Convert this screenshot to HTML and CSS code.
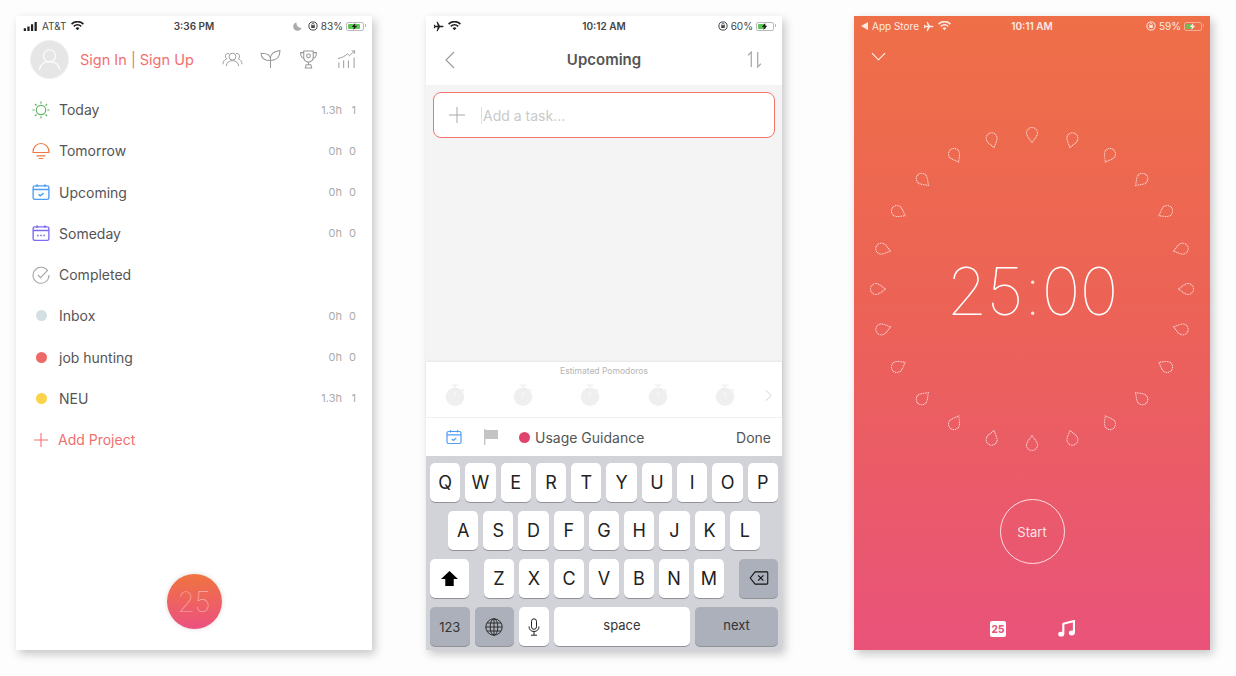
FILE: index.html
```html
<!DOCTYPE html>
<html lang="en">
<head>
    <meta charset="UTF-8">
    <meta name="viewport" content="width=device-width, initial-scale=1.0">
    <title>Focus To-Do</title>
    <link rel="stylesheet" href="styles.css">
</head>
<body>
    <!-- shared icons -->
    <svg class="defs">
        <symbol id="wifi" viewBox="0 0 14 10"><path d="M7 9.6 4.9 7.3a3 3 0 0 1 4.2 0zM3.6 6 2.4 4.7a6.6 6.6 0 0 1 9.2 0L10.4 6a5 5 0 0 0-6.8 0zM1.2 3.6 0 2.3a10 10 0 0 1 14 0l-1.2 1.3a8.3 8.3 0 0 0-11.6 0z" fill="currentColor"/></symbol>
        <symbol id="plane" viewBox="0 0 12 12"><path d="M11.5 6c0-.5-.5-.9-1.2-.9H7.6L5 .8H3.9l1.3 4.3H2.7L1.8 4H.8l.5 2-.5 2h1l.9-1.1h2.5L3.9 11.2H5l2.6-4.3h2.700c.7 0 1.200-.4 1.200-.9z" fill="currentColor"/></symbol>
        <symbol id="lock" viewBox="0 0 10 10"><circle cx="5" cy="5" r="4.1" fill="none" stroke="currentColor"/><rect x="3.2" y="4.2" width="3.6" height="2.8" fill="currentColor"/><path d="M3.8 4.3V3.500a1.200 1.200 0 0 1 2.400 0v.8" fill="none" stroke="currentColor" stroke-width=".7"/></symbol>
        <symbol id="bolt" viewBox="0 0 8 10"><path d="M5 0 0 5.800h3L2.500 10 8 3.800H4.600z" fill="currentColor"/></symbol>
        <symbol id="petal" viewBox="-9 -12 18 24"><path d="M0 7.5C-2 4.500-5.500 1-5.500-2A5.500 5.500 0 0 1 5.500-2C5.500 1 2 4.500 0 7.500z" fill="none" stroke="#fff" stroke-opacity=".8" stroke-width="1.100" stroke-linecap="round" stroke-dasharray="0.1 1.600"/></symbol>
        <symbol id="tomato" viewBox="0 0 24 28"><path d="M8 1.500h8M12 1.500v4M20 6l2.500 2.500" stroke="#efefef" stroke-width="1.500" fill="none"/><circle cx="12" cy="15.500" r="11.300" fill="#efefef"/><path d="M12 10.500v4.500" stroke="#fff"/></symbol>
        <symbol id="upcoming" viewBox="0 0 16 16"><rect x="1" y="2.500" width="14" height="12" rx="1.500" fill="none" stroke="currentColor" stroke-width="1.200"/><path d="M1 5.800h14M4.500 1v2.500M11.500 1v2.500" fill="none" stroke="currentColor" stroke-width="1.200"/><path d="M5.800 10l1.500 1.400 3-2.400" fill="none" stroke="currentColor" stroke-width="1.200"/></symbol>
    </svg>

    <main class="stage">

        <!-- 메뉴 화면 -->
        <section class="phone phone_menu">
            <div class="status">
                <div class="status_side">
                    <svg class="signal" viewBox="0 0 15 10"><path d="M0 7h2.500v3H0zM4 5h2.500v5H4zM8 2.500h2.500V10H8zM12 0h2.500v10H12z" fill="currentColor"/></svg>
                    <span>AT&amp;T</span>
                    <svg class="st_wifi"><use href="#wifi"/></svg>
                </div>
                <b class="status_time">3:36 PM</b>
                <div class="status_side status_right">
                    <svg class="st_moon" viewBox="0 0 10 10"><path d="M4 .5a4.700 4.700 0 1 0 5.500 6A5 5 0 0 1 4 .5z" fill="#aaa"/></svg>
                    <svg class="st_lock"><use href="#lock"/></svg>
                    <span>83%</span>
                    <span class="batt"><i class="batt_fill" style="width:83%"></i><svg class="batt_bolt"><use href="#bolt"/></svg></span>
                </div>
            </div>

            <header class="user_bar">
                <div class="avatar">
                    <svg viewBox="0 0 40 40"><circle cx="20" cy="16" r="6.500" fill="none" stroke="#fff" stroke-width="1.200"/><path d="M9 31c1-6 5-8.500 11-8.500S30 25 31 31" fill="none" stroke="#fff" stroke-width="1.200"/></svg>
                </div>
                <a class="sign_link" href="#">Sign In | Sign Up</a>
                <div class="user_icons">
                    <svg viewBox="0 0 22 18"><g fill="none" stroke="#999" stroke-width="1"><circle cx="11" cy="6" r="3.600"/><path d="M4.500 16c.5-4 3-5.800 6.500-5.800s6 1.800 6.500 5.800"/><path d="M7.200 2.700a3 3 0 0 0-2.200 5.500C2.500 9 1.200 11 1 14M14.800 2.700A3 3 0 0 1 17 8.200c2.500.8 3.800 2.800 4 5.800"/></g></svg>
                    <svg viewBox="0 0 20 18"><g fill="none" stroke="#999" stroke-width="1"><path d="M10 17V8.500C10 4 6 3 1 3c0 5 3.500 7 9 7M10 8c0-4 3.500-6.800 9-7.500 0 6-3 9.500-9 9.500"/></g></svg>
                    <svg viewBox="0 0 18 18"><g fill="none" stroke="#999" stroke-width="1"><path d="M4.500 1h9v6a4.500 4.500 0 0 1-9 0zM4.500 2.500H1.500c0 3 1 5 3.500 5.500M13.500 2.500h3c0 3-1 5-3.500 5.500M9 11.500V14M6 17l.8-3h4.400l.8 3z"/><circle cx="9" cy="5.500" r="1.800"/></g></svg>
                    <svg viewBox="0 0 20 20"><g fill="none" stroke="#999" stroke-width="1"><path d="M1 9c5-1 8-3 10-5l2 2 5.500-5M15.500 1h3v3M2 19v-6M7 19v-8M12 19v-8M18 19V8"/></g></svg>
                </div>
            </header>

            <ul class="menu_lst">
                <li class="menu_item">
                    <span class="menu_ico"><svg viewBox="0 0 20 20"><g fill="none" stroke="#5cb860" stroke-width="1.300"><circle cx="10" cy="10" r="5.200"/><path d="M10 .5v2.500M10 17v2.500M.5 10H3M17 10h2.500M3.300 3.300l1.700 1.700M15 15l1.700 1.700M3.300 16.700 5 15M15 5l1.700-1.700"/></g></svg></span>
                    <span class="menu_txt">Today</span><span class="menu_hour">1.3h</span><span class="menu_cnt">1</span>
                </li>
                <li class="menu_item">
                    <span class="menu_ico"><svg viewBox="0 0 18 18"><g fill="none" stroke="#f0793e" stroke-width="1.200"><path d="M1 10.500C1 5 4.500 1.500 9 1.500s8 3.500 8 9zM.5 10.500h17M4.500 13.800h9M6.800 16.500h4.400"/></g></svg></span>
                    <span class="menu_txt">Tomorrow</span><span class="menu_hour">0h</span><span class="menu_cnt">0</span>
                </li>
                <li class="menu_item">
                    <span class="menu_ico ico_blue"><svg><use href="#upcoming"/></svg></span>
                    <span class="menu_txt">Upcoming</span><span class="menu_hour">0h</span><span class="menu_cnt">0</span>
                </li>
                <li class="menu_item">
                    <span class="menu_ico"><svg viewBox="0 0 16 16"><g fill="none" stroke="#7a6bf0" stroke-width="1.200"><rect x="1" y="2.500" width="14" height="12" rx="1.500"/><path d="M1 5.800h14M4.500 1v2.500M11.500 1v2.500"/></g><path d="M4.500 9.500h1.400v1.400H4.500zM7.300 9.500h1.400v1.400H7.300zM10.100 9.500h1.400v1.400h-1.400z" fill="#7a6bf0"/></svg></span>
                    <span class="menu_txt">Someday</span>
                    <span class="menu_hour">0h</span><span class="menu_cnt">0</span>
                </li>
                <li class="menu_item">
                    <span class="menu_ico"><svg viewBox="0 0 20 20"><g fill="none" stroke="#a5a5a5" stroke-width="1.200"><path d="M17.500 5.500A8.900 8.900 0 1 0 18.900 10"/><path d="M6.500 10l3 3 8-8.500"/></g></svg></span>
                    <span class="menu_txt">Completed</span>
                </li>
                <li class="menu_item">
                    <span class="menu_ico"><i class="dot dot_inbox"></i></span>
                    <span class="menu_txt">Inbox</span><span class="menu_hour">0h</span><span class="menu_cnt">0</span>
                </li>
                <li class="menu_item">
                    <span class="menu_ico"><i class="dot dot_job"></i></span>
                    <span class="menu_txt">job hunting</span><span class="menu_hour">0h</span><span class="menu_cnt">0</span>
                </li>
                <li class="menu_item">
                    <span class="menu_ico"><i class="dot dot_neu"></i></span>
                    <span class="menu_txt">NEU</span><span class="menu_hour">1.3h</span><span class="menu_cnt">1</span>
                </li>
                <li class="menu_item menu_add">
                    <span class="menu_ico"><svg viewBox="0 0 14 14"><path d="M7 0v14M0 7h14" stroke="#f0706e" stroke-width="1.100"/></svg></span>
                    <span class="menu_txt">Add Project</span>
                </li>
            </ul>

            <button class="fab">25</button>
        </section>

        <!-- 할일 입력 화면 -->
        <section class="phone phone_task">
            <div class="status">
                <div class="status_side">
                    <svg class="st_plane"><use href="#plane"/></svg>
                    <svg class="st_wifi"><use href="#wifi"/></svg>
                </div>
                <b class="status_time">10:12 AM</b>
                <div class="status_side status_right">
                    <svg class="st_lock"><use href="#lock"/></svg>
                    <span>60%</span>
                    <span class="batt"><i class="batt_fill" style="width:60%"></i><svg class="batt_bolt"><use href="#bolt"/></svg></span>
                </div>
            </div>
            <header class="task_head">
                <svg class="task_back" viewBox="0 0 10 18"><path d="M9 1 1 9l8 8" fill="none" stroke="#999" stroke-width="1.100"/></svg>
                <h1 class="task_title">Upcoming</h1>
                <svg class="task_sort" viewBox="0 0 16 16"><path d="M5 15V1L2 4M11 1v14l3-3" fill="none" stroke="#aaa" stroke-width="1.200"/></svg>
            </header>
            <div class="task_body">
                <div class="task_input">
                    <svg class="task_plus" viewBox="0 0 16 16"><path d="M8 0v16M0 8h16" stroke="#aaa" stroke-width="1"/></svg>
                    <span class="task_holder">Add a task...</span>
                </div>
            </div>
            <div class="pomo_panel">
                <div class="pomo_label">Estimated Pomodoros</div>
                <div class="pomo_row">
                    <svg class="pomo_ico"><use href="#tomato"/></svg>
                    <svg class="pomo_ico"><use href="#tomato"/></svg>
                    <svg class="pomo_ico"><use href="#tomato"/></svg>
                    <svg class="pomo_ico"><use href="#tomato"/></svg>
                    <svg class="pomo_ico"><use href="#tomato"/></svg>
                    <svg class="pomo_next" viewBox="0 0 8 14"><path d="M1 1l6 6-6 6" fill="none" stroke="#ccc"/></svg>
                </div>
            </div>
            <div class="task_tools">
                <svg class="tool_cal"><use href="#upcoming"/></svg>
                <svg class="tool_flag" viewBox="0 0 16 16"><path d="M1 0h1.400v16H1zM2.400 1H15v9H2.400z" fill="#c4c4c4"/></svg>
                <i class="dot dot_usage"></i>
                <span class="tool_name">Usage Guidance</span>
                <span class="tool_done">Done</span>
            </div>
            <div class="keyboard">
                <div class="kb_row">
                    <span class="key">Q</span><span class="key">W</span><span class="key">E</span><span class="key">R</span><span class="key">T</span><span class="key">Y</span><span class="key">U</span><span class="key">I</span><span class="key">O</span><span class="key">P</span>
                </div>
                <div class="kb_row kb_row2">
                    <span class="key">A</span><span class="key">S</span><span class="key">D</span><span class="key">F</span><span class="key">G</span><span class="key">H</span><span class="key">J</span><span class="key">K</span><span class="key">L</span>
                </div>
                <div class="kb_row kb_row3">
                    <span class="key key_shift"><svg viewBox="0 0 18 16"><path d="M9 0 18 8.500h-4.500V16h-9V8.500H0z" fill="#000"/></svg></span>
                    <div class="kb_letters">
                        <span class="key">Z</span><span class="key">X</span><span class="key">C</span><span class="key">V</span><span class="key">B</span><span class="key">N</span><span class="key">M</span>
                    </div>
                    <span class="key key_gray key_del"><svg viewBox="0 0 22 16"><path d="M6.500 1H20a1 1 0 0 1 1 1v12a1 1 0 0 1-1 1H6.500L1 8z" fill="none" stroke="#111" stroke-width="1.200"/><path d="M10 5l6 6M16 5l-6 6" stroke="#111" stroke-width="1.300"/></svg></span>
                </div>
                <div class="kb_row kb_row4">
                    <span class="key key_gray key_fn">123</span>
                    <span class="key key_gray key_fn"><svg class="key_globe" viewBox="0 0 18 18"><g fill="none" stroke="#222" stroke-width=".9"><circle cx="9" cy="9" r="8.200"/><ellipse cx="9" cy="9" rx="3.800" ry="8.200"/><path d="M9 .8v16.400M.8 9h16.400M2 5h14M2 13h14"/></g></svg></span>
                    <span class="key key_mic"><svg viewBox="0 0 12 18"><g fill="none" stroke="#222" stroke-width="1"><rect x="3.500" y=".8" width="5" height="10.500" rx="2.500"/><path d="M1 8.500c0 3 2 5 5 5s5-2 5-5M6 13.500v3.500M3 17.200h6"/></g></svg></span>
                    <span class="key key_space">space</span>
                    <span class="key key_gray key_next">next</span>
                </div>
            </div>
        </section>

        <!-- 타이머 화면 -->
        <section class="phone phone_timer">
            <div class="status">
                <div class="status_side">
                    <svg class="st_back" viewBox="0 0 7 8"><path d="M7 0v8L0 4z" fill="currentColor"/></svg>
                    <span>App Store</span>
                    <svg class="st_plane"><use href="#plane"/></svg>
                    <svg class="st_wifi"><use href="#wifi"/></svg>
                </div>
                <b class="status_time">10:11 AM</b>
                <div class="status_side status_right">
                    <svg class="st_lock"><use href="#lock"/></svg>
                    <span>59%</span>
                    <span class="batt"><i class="batt_fill" style="width:59%"></i><svg class="batt_bolt"><use href="#bolt"/></svg></span>
                </div>
            </div>
            <div class="timer_top">
                <svg viewBox="0 0 16 9"><path d="M1 1l7 7 7-7" fill="none" stroke="#fff" stroke-width="1.100"/></svg>
            </div>
            <div class="dial">
                <svg class="dial_petals" viewBox="-165 -165 330 330">
                    <use href="#petal" x="-9" y="-166" width="18" height="24"/>
                    <use href="#petal" x="-9" y="-166" width="18" height="24" transform="rotate(15)"/>
                    <use href="#petal" x="-9" y="-166" width="18" height="24" transform="rotate(30)"/>
                    <use href="#petal" x="-9" y="-166" width="18" height="24" transform="rotate(45)"/>
                    <use href="#petal" x="-9" y="-166" width="18" height="24" transform="rotate(60)"/>
                    <use href="#petal" x="-9" y="-166" width="18" height="24" transform="rotate(75)"/>
                    <use href="#petal" x="-9" y="-166" width="18" height="24" transform="rotate(90)"/>
                    <use href="#petal" x="-9" y="-166" width="18" height="24" transform="rotate(105)"/>
                    <use href="#petal" x="-9" y="-166" width="18" height="24" transform="rotate(120)"/>
                    <use href="#petal" x="-9" y="-166" width="18" height="24" transform="rotate(135)"/>
                    <use href="#petal" x="-9" y="-166" width="18" height="24" transform="rotate(150)"/>
                    <use href="#petal" x="-9" y="-166" width="18" height="24" transform="rotate(165)"/>
                    <use href="#petal" x="-9" y="-166" width="18" height="24" transform="rotate(180)"/>
                    <use href="#petal" x="-9" y="-166" width="18" height="24" transform="rotate(195)"/>
                    <use href="#petal" x="-9" y="-166" width="18" height="24" transform="rotate(210)"/>
                    <use href="#petal" x="-9" y="-166" width="18" height="24" transform="rotate(225)"/>
                    <use href="#petal" x="-9" y="-166" width="18" height="24" transform="rotate(240)"/>
                    <use href="#petal" x="-9" y="-166" width="18" height="24" transform="rotate(255)"/>
                    <use href="#petal" x="-9" y="-166" width="18" height="24" transform="rotate(270)"/>
                    <use href="#petal" x="-9" y="-166" width="18" height="24" transform="rotate(285)"/>
                    <use href="#petal" x="-9" y="-166" width="18" height="24" transform="rotate(300)"/>
                    <use href="#petal" x="-9" y="-166" width="18" height="24" transform="rotate(315)"/>
                    <use href="#petal" x="-9" y="-166" width="18" height="24" transform="rotate(330)"/>
                    <use href="#petal" x="-9" y="-166" width="18" height="24" transform="rotate(345)"/>
                </svg>
                <div class="dial_time">25<span class="dial_colon">:</span>00</div>
            </div>
            <button class="start_btn">Start</button>
            <div class="timer_bottom">
                <span class="cal_tile">25</span>
                <svg class="music_ico" viewBox="0 0 16 16"><path d="M5 3.500 15 1v11M5 3v10" fill="none" stroke="#fff" stroke-width="2"/><ellipse cx="3" cy="13.300" rx="2.800" ry="2.300" fill="#fff"/><ellipse cx="13" cy="12.200" rx="2.800" ry="2.300" fill="#fff"/></svg>
            </div>
        </section>

    </main>
</body>
</html>
```

FILE: styles.css
```css
/* 초기화 */
body,ul,h1{margin: 0; padding: 0;}
ul{list-style: none;}
a{text-decoration: none;}
button{border: 0; padding: 0; font-family: inherit; background: none;}
i{display: block;}

body{
    width: 1236px; height: 676px; overflow: hidden;
    background-color: #fdfdfd; color: #555;
    font-family: Inter, "Noto Sans", sans-serif;
}
.defs{display: none;}

/* 레이아웃 */
.stage{display: flex; padding: 16px 0 0 16px;}
.phone{
    width: 356px; height: 634px; flex: none;
    display: flex; flex-direction: column;
    position: relative;
    background-color: #fff;
    box-shadow: 3px 4px 9px rgba(0,0,0,.22);
}
.phone_task{margin-left: 54px;}
.phone_timer{margin-left: 72px;}

/* 상태바 */
.status{
    height: 20px; padding: 0 8px 0 7px; flex: none;
    display: flex; align-items: center; justify-content: space-between;
    position: relative;
    font-size: 10px; color: #444;
}
.status_side{display: flex; align-items: center; gap: 4px;}
.status_right{gap: 3px;}
.status_time{
    position: absolute; left: 0; right: 0; text-align: center;
    font-weight: 600; font-size: 10px; color: #444;
}
.signal{width: 15px; height: 9px; color: #222;}
.st_wifi{width: 13px; height: 10px; color: #222;}
.st_plane{width: 11px; height: 11px; color: #222;}
.st_lock{width: 10px; height: 10px; color: #444;}
.st_moon{width: 9px; height: 9px; margin-right: 3px;}
.st_back{width: 7px; height: 8px;}
.batt{
    width: 18px; height: 9px; padding: 1px; box-sizing: border-box;
    border: 1px solid #bbb; border-radius: 2px; position: relative;
}
.batt::after{
    content: ""; position: absolute; right: -3px; top: 1.5px;
    width: 1px; height: 3px; background-color: #bbb;
}
.batt_fill{height: 100%; background-color: #5fc855; border-radius: 1px;}
.batt_bolt{
    position: absolute; left: 4px; top: 0;
    width: 7px; height: 7px; color: #222;
}

/* 메뉴 화면 */
.user_bar{
    height: 46px; padding: 0 15px 0 14px;
    display: flex; align-items: center;
}
.avatar{
    width: 39px; height: 39px; flex: none; border-radius: 50%; box-sizing: border-box;
    background-color: #e6e6e6; border: 1px solid #f0f0f0;
}
.avatar svg{width: 37px; height: 37px; display: block;}
.sign_link{margin-left: 11px; font-size: 14.5px; color: #f26f6f;}
.user_icons{margin-left: auto; display: flex; align-items: center; gap: 17px;}
.user_icons svg{width: 21px; height: 19px; display: block;}

.menu_lst{margin-top: 7px;}
.menu_item{
    height: 41.25px; padding: 0 16px;
    display: flex; align-items: center;
}
.menu_ico{
    width: 18px; height: 18px; flex: none; margin-right: 9px;
    display: flex; align-items: center; justify-content: center;
    color: #4d9df5;
}
.menu_ico svg{width: 18px; height: 18px; display: block;}
.menu_txt{font-size: 14px; color: #555; flex: 1;}
.menu_hour{font-size: 11px; color: #aaa;}
.menu_cnt{font-size: 11px; color: #aaa; width: 14px; text-align: right;}
.menu_add .menu_ico{margin-right: 8px;}
.menu_add .menu_ico svg{width: 14px; height: 14px;}
.menu_add .menu_txt{color: #f0706e;}

.dot{width: 11px; height: 11px; border-radius: 50%;}
.dot_inbox{background-color: #d3dfe0;}
.dot_job{background-color: #ee6a68;}
.dot_neu{background-color: #fbd44a;}
.dot_usage{background-color: #e0446d; flex: none;}

.fab{
    position: absolute; left: 150.5px; top: 558px;
    width: 55px; height: 55px; border-radius: 50%;
    background: linear-gradient(#f0743f, #ec5080);
    box-shadow: 0 0 5px rgba(0,0,0,.15);
    color: rgba(255,255,255,.5); font-size: 28px; font-weight: 100;
}

/* 할일 입력 화면 */
.task_head{
    height: 49px; padding: 0 19px 2px;
    box-sizing: border-box;
    display: flex; align-items: center; justify-content: space-between;
    position: relative;
}
.task_back{width: 10px; height: 18px;}
.task_title{
    position: absolute; left: 0; right: 0; text-align: center;
    font-size: 15px; font-weight: 600; color: #555;
}
.task_sort{width: 17px; height: 17px;}
.task_body{flex: 1; padding: 7px; background-color: #f4f4f4;}
.task_input{
    height: 46px; box-sizing: border-box;
    padding-left: 15px; border: 1px solid #f0736c; border-radius: 8px;
    background-color: #fff;
    display: flex; align-items: center;
}
.task_plus{width: 16px; height: 16px; flex: none;}
.task_holder{
    margin-left: 16px; padding-left: 1px;
    border-left: 1px solid #f9d5d3;
    font-size: 14px; color: #c9c9c9;
}
.pomo_panel{
    height: 55px; flex: none;
    box-shadow: 0 -1px 2px rgba(0,0,0,.06);
    position: relative;
}
.pomo_label{padding-top: 4px; text-align: center; font-size: 8.5px; color: #b5b5b5;}
.pomo_row{
    margin-top: 3px; padding: 5px 0 0 19px;
    display: flex; align-items: center; gap: 47.5px;
}
.pomo_ico{width: 20px; height: 23px; flex: none;}
.pomo_next{width: 7px; height: 13px; flex: none; margin-left: -18px;}
.task_tools{
    height: 39px; flex: none; box-sizing: border-box;
    padding: 0 11px 0 20px; border-top: 1px solid #f0f0f0;
    display: flex; align-items: center;
}
.tool_cal{width: 16px; height: 16px; color: #4d9df5;}
.tool_flag{width: 16px; height: 16px; margin: 0 20px 0 21px;}
.tool_name{margin-left: 5px; font-size: 14px; color: #555;}
.tool_done{margin-left: auto; font-size: 14px; color: #555;}

.keyboard{
    height: 194px; flex: none; box-sizing: border-box;
    padding: 7px 4px 0;
    background-color: #d1d3d9;
    display: flex; flex-direction: column; gap: 9.6px;
}
.kb_row{display: flex; gap: 5px;}
.kb_row2{padding: 0 18px;}
.kb_row3{justify-content: space-between;}
.kb_letters{display: flex; gap: 5px; width: 240px;}
.key{
    flex: 1 1 0; height: 38.5px; box-sizing: border-box;
    display: flex; align-items: center; justify-content: center;
    background-color: #fff; border-radius: 5px;
    box-shadow: 0 1px 0 rgba(0,0,0,.3);
    font-size: 18px; color: #222;
}
.key_gray{background-color: #abb0ba;}
.key_shift,.key_del{flex: none; width: 39px;}
.key_shift svg{width: 17px; height: 15px;}
.key_del svg{width: 20px; height: 14px;}
.kb_row4 .key{flex: none; font-size: 13px; color: #333; padding-bottom: 3px;}
.kb_row4 .key_fn{width: 39.5px; padding-bottom: 0;}
.key_globe{width: 18px; height: 18px;}
.kb_row4 .key_mic{width: 30px; padding-bottom: 0;}
.key_mic svg{width: 12px; height: 18px;}
.kb_row4 .key_space{width: 136px;}
.kb_row4 .key_next{width: 83px;}

/* 타이머 화면 */
.phone_timer{
    background: linear-gradient(#ef6f48, #ec6356 45%, #e9537a);
}
.phone_timer .status,
.phone_timer .status_time,
.phone_timer .st_wifi,
.phone_timer .st_plane,
.phone_timer .st_lock{color: #fff;}
.phone_timer .status{opacity: .85;}
.phone_timer .batt{border-color: #f3b9a5;}
.phone_timer .batt_bolt{color: #fff;}
.timer_top{height: 30px; margin-top: 5px; padding-left: 17px; display: flex; align-items: center;}
.timer_top svg{width: 15px; height: 9px;}
.dial{
    width: 330px; height: 330px; margin: 53px auto 0; padding-top: 4px; box-sizing: border-box;
    display: flex; align-items: center; justify-content: center;
    position: relative;
}
.dial_petals{position: absolute; left: 0; top: 0; width: 330px; height: 330px;}
.dial_time{
    font-size: 66px; font-weight: 100; color: #fff; line-height: 1;
    letter-spacing: -1px;
}
.dial_colon{opacity: .8; margin: 0 1px;}
.start_btn{
    width: 65px; height: 65px; margin: 45px auto 0; box-sizing: border-box;
    border: 1px solid rgba(255,255,255,.8); border-radius: 50%;
    color: rgba(255,255,255,.85); font-size: 13px;
}
.timer_bottom{
    margin-top: 56px; padding-left: 136px;
    display: flex; align-items: center; gap: 52px;
}
.cal_tile{
    width: 16px; height: 16px; border-radius: 2px;
    background-color: #fff; color: #e8557a;
    font-size: 10px; font-weight: 800; line-height: 16px; text-align: center;
}
.music_ico{width: 17px; height: 17px;}
```
